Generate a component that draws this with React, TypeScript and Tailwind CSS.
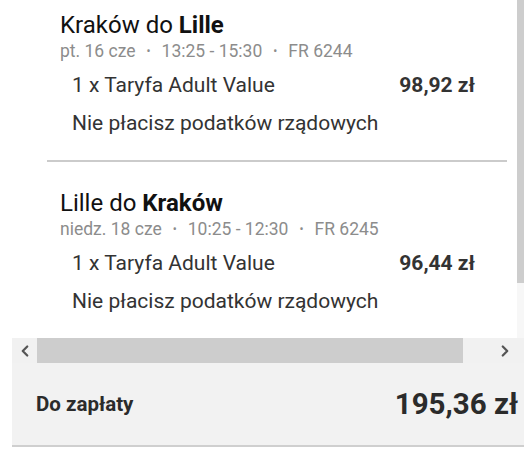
import { ChevronLeft, ChevronRight } from "lucide-react";

type Flight = {
  from: string;
  to: string;
  meta: string[];
  fare: string;
  price: string;
};

const flights: Flight[] = [
  {
    from: "Kraków",
    to: "Lille",
    meta: ["pt. 16 cze", "13:25 - 15:30", "FR 6244"],
    fare: "1 x Taryfa Adult Value",
    price: "98,92 zł",
  },
  {
    from: "Lille",
    to: "Kraków",
    meta: ["niedz. 18 cze", "10:25 - 12:30", "FR 6245"],
    fare: "1 x Taryfa Adult Value",
    price: "96,44 zł",
  },
];

function FlightBlock({ flight }: { flight: Flight }) {
  return (
    <div className="pl-[48px]">
      <h2 className="text-[24px] leading-[28px] text-[#111]">
        {flight.from} do <span className="font-bold">{flight.to}</span>
      </h2>
      <div className="flex items-center text-[17.5px] leading-[24px] text-[#8c8c8c]">
        {flight.meta.map((m, i) => (
          <span key={m} className="flex items-center">
            {i > 0 && <span className="px-[11px] text-[12px]">•</span>}
            {m}
          </span>
        ))}
      </div>
      <div className="mt-[8px] pl-[12px] pr-[42px] text-[21px] leading-[28px] text-[#333]">
        <div className="flex justify-between">
          <span>{flight.fare}</span>
          <span className="font-bold">{flight.price}</span>
        </div>
        <div className="mt-[10px]">Nie płacisz podatków rządowych</div>
      </div>
    </div>
  );
}

export default function App() {
  return (
    <div className="w-[524px] h-[450px] bg-white font-['Roboto',sans-serif] overflow-hidden">
      <div className="ml-[12px] flex flex-col">
        <div className="flex h-[338px]">
          <div className="flex-1 pt-[11px]">
            <FlightBlock flight={flights[0]} />
            <div className="ml-[35px] mr-[10px] mt-[23px] h-[2px] bg-[#cbcbcb]" />
            <div className="mt-[27px]">
              <FlightBlock flight={flights[1]} />
            </div>
          </div>
          {/* vertical scrollbar */}
          <div className="w-[7px] flex flex-col bg-[#f7f7f7]">
            <div className="h-[283px] bg-[#cdcdcd]" />
          </div>
        </div>

        {/* horizontal scrollbar */}
        <div className="flex h-[25px] bg-[#f1f1f1] text-[#555]">
          <div className="w-[25px] flex items-center justify-center">
            <ChevronLeft size={18} strokeWidth={3} />
          </div>
          <div className="w-[426px] bg-[#cdcdcd]" />
          <div className="flex-1 flex items-center justify-end pr-[10px]">
            <ChevronRight size={18} strokeWidth={3} />
          </div>
        </div>

        <div className="h-[84px] flex items-center justify-between pl-[24px] pr-[6px] bg-[#f2f2f2] border-b-2 border-[#cfcfcf] text-[#2b2b2b]">
          <span className="text-[20.5px] font-bold">Do zapłaty</span>
          <span className="text-[29.5px] font-bold">195,36 zł</span>
        </div>
      </div>
    </div>
  );
}
